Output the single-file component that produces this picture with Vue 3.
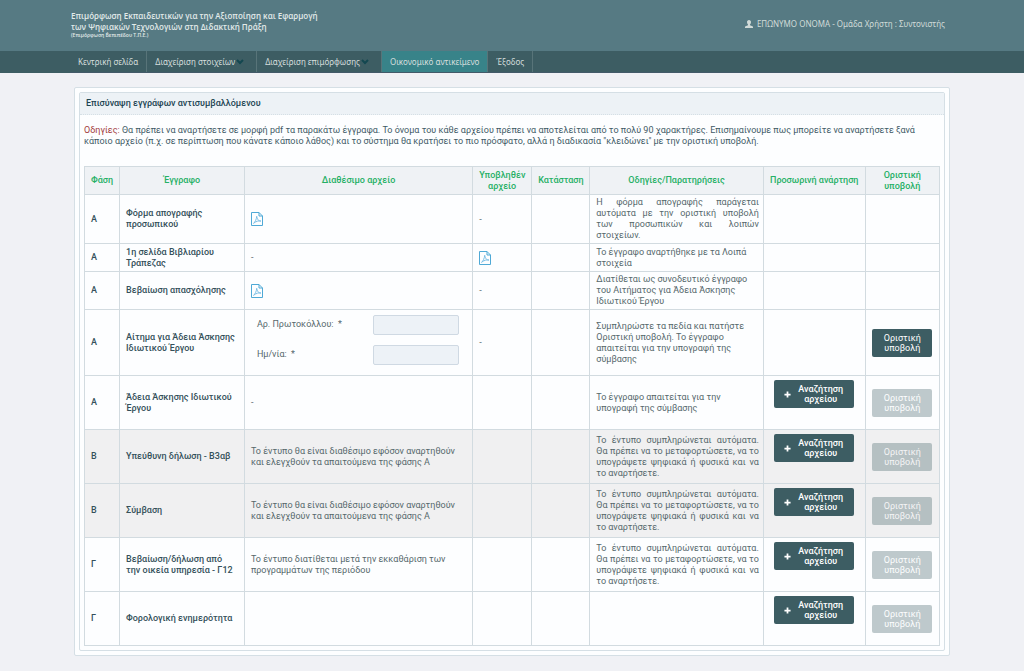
<script setup>
const menu = [
  { label: 'Κεντρική σελίδα' },
  { label: 'Διαχείριση στοιχείων', sub: true },
  { label: 'Διαχείριση επιμόρφωσης', sub: true },
  { label: 'Οικονομικό αντικείμενο', active: true },
  { label: 'Έξοδος' },
]

const heads = [
  'Φάση',
  'Έγγραφο',
  'Διαθέσιμο αρχείο',
  'Υποβληθέν αρχείο',
  'Κατάσταση',
  'Οδηγίες/Παρατηρήσεις',
  'Προσωρινή ανάρτηση',
  'Οριστική υποβολή',
]

const autoNote =
  'Το έντυπο συμπληρώνεται αυτόματα. Θα πρέπει να το μεταφορτώσετε, να το υπογράψετε ψηφιακά ή φυσικά και να το αναρτήσετε.'
const phaseNote = 'Το έντυπο θα είναι διαθέσιμο εφόσον αναρτηθούν και ελεγχθούν τα απαιτούμενα της φάσης Α'

const rows = [
  { phase: 'Α', doc: 'Φόρμα απογραφής προσωπικού', filePdf: true, sent: '-', note: 'Η φόρμα απογραφής παράγεται αυτόματα με την οριστική υποβολή των προσωπικών και λοιπών στοιχείων.', justify: true },
  { phase: 'Α', doc: '1η σελίδα Βιβλιαρίου Τράπεζας', file: '-', sentPdf: true, note: 'Το έγγραφο αναρτήθηκε με τα Λοιπά στοιχεία' },
  { phase: 'Α', doc: 'Βεβαίωση απασχόλησης', filePdf: true, sent: '-', note: 'Διατίθεται ως συνοδευτικό έγγραφο του Αιτήματος για Άδεια Άσκησης Ιδιωτικού Έργου' },
  { phase: 'Α', doc: 'Αίτημα για Άδεια Άσκησης Ιδιωτικού Έργου', form: true, sent: '-', note: 'Συμπληρώστε τα πεδία και πατήστε Οριστική υποβολή. Το έγγραφο απαιτείται για την υπογραφή της σύμβασης', submit: 'on' },
  { phase: 'Α', doc: 'Άδεια Άσκησης Ιδιωτικού Έργου', file: '-', note: 'Το έγγραφο απαιτείται για την υπογραφή της σύμβασης', upload: true, submit: 'off' },
  { phase: 'Β', doc: 'Υπεύθυνη δήλωση - Β3αβ', file: phaseNote, note: autoNote, justify: true, upload: true, submit: 'off', shade: true },
  { phase: 'Β', doc: 'Σύμβαση', file: phaseNote, note: autoNote, justify: true, upload: true, submit: 'off', shade: true },
  { phase: 'Γ', doc: 'Βεβαίωση/δήλωση από την οικεία υπηρεσία - Γ12', file: 'Το έντυπο διατίθεται μετά την εκκαθάριση των προγραμμάτων της περιόδου', note: autoNote, justify: true, upload: true, submit: 'off' },
  { phase: 'Γ', doc: 'Φορολογική ενημερότητα', note: '', upload: true, submit: 'off' },
]
</script>

<template>
  <div class="page">
    <header class="top">
      <div class="wrap top-row">
        <div class="brand">
          <div>Επιμόρφωση Εκπαιδευτικών για την Αξιοποίηση και Εφαρμογή</div>
          <div>των Ψηφιακών Τεχνολογιών στη Διδακτική Πράξη</div>
          <div class="brand-sub">(Επιμόρφωση Β΄επιπέδου Τ.Π.Ε.)</div>
        </div>
        <div class="user">
          <svg class="user-icon" viewBox="0 0 16 16" aria-hidden="true">
            <path d="M8 0c2.600 0 4 1.900 4 4.500 0 2-.8 3.600-2 4.600v1.300l4.800 2c.8.400 1.200 1 1.200 1.800V16H0v-1.800c0-.8.400-1.400 1.200-1.800l4.800-2V9.100c-1.200-1-2-2.600-2-4.600C4 1.900 5.400 0 8 0z" />
          </svg>
          <span>ΕΠΩΝΥΜΟ ΟΝΟΜΑ - Ομάδα Χρήστη : Συντονιστής</span>
        </div>
      </div>
    </header>

    <nav class="nav">
      <div class="wrap">
        <div class="menu">
          <a v-for="m in menu" :key="m.label" href="#" class="item" :class="{ active: m.active, sub: m.sub }">
            {{ m.label }}
            <svg v-if="m.sub" class="chev" viewBox="0 0 8 6" aria-hidden="true"><path d="M1 1l3 3 3-3" /></svg>
          </a>
        </div>
      </div>
    </nav>

    <main class="wrap main">
      <section class="outer">
        <div class="inner">
          <h1 class="title">Επισύναψη εγγράφων αντισυμβαλλόμενου</h1>
          <div class="content">
            <p class="intro">
              <span class="warn">Οδηγίες:</span> Θα πρέπει να αναρτήσετε σε μορφή pdf τα παρακάτω έγγραφα. Το όνομα του κάθε αρχείου πρέπει να αποτελείται από το πολύ 90 χαρακτήρες. Επισημαίνουμε πως μπορείτε να αναρτήσετε ξανά κάποιο αρχείο (π.χ. σε περίπτωση που κάνατε κάποιο λάθος) και το σύστημα θα κρατήσει το πιο πρόσφατο, αλλά η διαδικασία "κλειδώνει" με την οριστική υποβολή.
            </p>
            <table class="grid">
              <colgroup>
                <col v-for="n in 8" :key="n" :class="'c' + n" />
              </colgroup>
              <thead>
                <tr>
                  <th v-for="h in heads" :key="h" scope="col">{{ h }}</th>
                </tr>
              </thead>
              <tbody>
                <tr v-for="(r, i) in rows" :key="i" :class="{ shade: r.shade, tall: r.upload, form: r.form }">
                  <td class="strong">{{ r.phase }}</td>
                  <td class="strong">{{ r.doc }}</td>
                  <td>
                    <a v-if="r.filePdf" href="#" class="pdf" aria-label="PDF">
                      <svg viewBox="0 0 12 14" aria-hidden="true">
                        <path d="M.5 .5h7.500l3.500 3.500v9.500H.5zM8 .5V4h3.500" />
                        <path class="thin" d="M2.500 11.300c1.400-.7 3-4 3.200-7 1 4 2.300 5 4.300 4.700-2.200-.6-5 .4-7.500 2.300z" />
                      </svg>
                    </a>
                    <div v-else-if="r.form" class="fields">
                      <label for="protocol">Αρ. Πρωτοκόλλου:&nbsp; *</label>
                      <input id="protocol" type="text" />
                      <label for="date">Ημ/νία:&nbsp; *</label>
                      <input id="date" type="text" />
                    </div>
                    <template v-else>{{ r.file }}</template>
                  </td>
                  <td>
                    <a v-if="r.sentPdf" href="#" class="pdf" aria-label="PDF">
                      <svg viewBox="0 0 12 14" aria-hidden="true">
                        <path d="M.5 .5h7.500l3.500 3.500v9.500H.5zM8 .5V4h3.500" />
                        <path class="thin" d="M2.500 11.300c1.400-.7 3-4 3.200-7 1 4 2.300 5 4.300 4.700-2.200-.6-5 .4-7.500 2.300z" />
                      </svg>
                    </a>
                    <template v-else>{{ r.sent }}</template>
                  </td>
                  <td></td>
                  <td :class="{ justify: r.justify }">{{ r.note }}</td>
                  <td class="up">
                    <button v-if="r.upload" type="button" class="btn find">
                      <svg class="plus" viewBox="0 0 8 8" aria-hidden="true"><path d="M4 .5v7M.5 4h7" /></svg>
                      <span>Αναζήτηση αρχείου</span>
                    </button>
                  </td>
                  <td>
                    <button v-if="r.submit" type="button" class="btn submit" :disabled="r.submit === 'off'">Οριστική υποβολή</button>
                  </td>
                </tr>
              </tbody>
            </table>
          </div>
        </div>
      </section>
    </main>
  </div>
</template>

<style>
body {
  margin: 0;
  background: #f0f1f5;
}
</style>

<style scoped>
.page {
  font-family: Roboto, "Noto Sans", sans-serif;
  font-size: 9px;
  line-height: 11px;
  color: #56686c;
}
.wrap {
  padding: 0 70px;
}
.top,
.nav {
  font-family: "Noto Sans", "Open Sans", sans-serif;
  font-size: 8px;
}
.top {
  background: #567a83;
}
.top-row {
  display: flex;
  justify-content: space-between;
  align-items: flex-start;
  height: 51px;
}
.brand {
  padding: 10px 0 0 1px;
  font-family: "Open Sans", "Noto Sans", sans-serif;
  font-weight: 600;
  color: #e2eaea;
}
.brand-sub {
  font-size: 5px;
  line-height: 7px;
}
.user {
  display: flex;
  align-items: center;
  gap: 4px;
  padding: 18px 9px 0 0;
  color: #d0dad8;
}
.user-icon {
  width: 8px;
  height: 8px;
  fill: #d0dad8;
}
.nav {
  background: #3d5d63;
}
.menu {
  display: flex;
  border-bottom: 1px solid #435a69;
}
.item {
  display: flex;
  align-items: center;
  height: 21px;
  padding: 0 8px;
  border-right: 1px solid #587479;
  color: #d5dedd;
  text-decoration: none;
}
.item.sub {
  padding-right: 12px;
}
.item.active {
  background: #388389;
}
.chev {
  width: 8px;
  height: 6px;
  margin-left: 1px;
  fill: none;
  stroke: #134750;
  stroke-width: 2;
}
.main {
  padding-top: 14px;
  padding-bottom: 15px;
}
.outer {
  margin: 0 4px;
  padding: 4px;
  background: #fdfeff;
  border: 1px solid #d5dfe5;
  border-radius: 2px;
}
.inner {
  border: 1px solid #d5dfe5;
  border-radius: 2px;
}
.title {
  margin: 0;
  padding: 5px 6px;
  background: #edf2f6;
  border-bottom: 1px dotted #d5dfe5;
  font-size: 9px;
  line-height: 11px;
  font-weight: 500;
  color: #1c4452;
}
.content {
  padding: 10px 4px 4px;
}
.intro {
  margin: 0 0 19px;
  color: #3f5a66;
}
.warn {
  color: #a23b3b;
}
.grid {
  width: 100%;
  table-layout: fixed;
  border-collapse: collapse;
}
.c1 { width: 4.1%; }
.c2 { width: 14.6%; }
.c3 { width: 26.7%; }
.c4 { width: 6.9%; }
.c5 { width: 6.8%; }
.c6 { width: 20.3%; }
.c7 { width: 11.9%; }
.c8 { width: 8.7%; }
th,
td {
  box-sizing: border-box;
  height: 28px;
  padding: 2px 6px;
  border: 1px solid #d2dbe0;
}
th {
  background: #eff2f5;
  font-weight: 500;
  color: #25b065;
}
.strong {
  font-weight: 500;
  color: #34505a;
}
.tall td {
  height: 54px;
}
.form td {
  height: 66px;
}
.shade td {
  background: #f0f0f1;
}
.justify {
  padding-right: 4px;
  text-align: justify;
}
.pdf {
  display: block;
  width: 12px;
  height: 14px;
}
.pdf svg {
  display: block;
  width: 100%;
  height: 100%;
  fill: none;
  stroke: #4fa9d6;
  stroke-width: 1;
}
.pdf .thin {
  stroke: #7cbfe6;
}
.fields {
  display: grid;
  grid-template-columns: 116px 86px;
  row-gap: 10px;
  align-items: center;
  padding: 0 6px 6px;
}
.fields input {
  box-sizing: border-box;
  width: 100%;
  height: 20px;
  padding: 0 4px;
  font: inherit;
  background: #edf2f7;
  border: 1px solid #cfd9e3;
  border-radius: 2px;
}
.btn {
  display: flex;
  align-items: center;
  justify-content: center;
  height: 28px;
  border: 0;
  border-radius: 2px;
  background: #3d5d63;
  color: #fff;
  font-family: inherit;
  font-size: 9px;
  line-height: 10px;
  font-weight: 500;
}
.submit {
  width: 60px;
  margin: 0 auto;
  padding: 0 8px;
  font-weight: 400;
}
.submit:disabled {
  opacity: 0.32;
}
.up {
  vertical-align: top;
  padding-top: 4px;
}
.find {
  width: 80px;
  margin: 0 auto;
  padding: 0 12px 0 11px;
  gap: 7px;
}
.find svg {
  flex: none;
  width: 7px;
  height: 7px;
  stroke: #fff;
  stroke-width: 2;
}
</style>
